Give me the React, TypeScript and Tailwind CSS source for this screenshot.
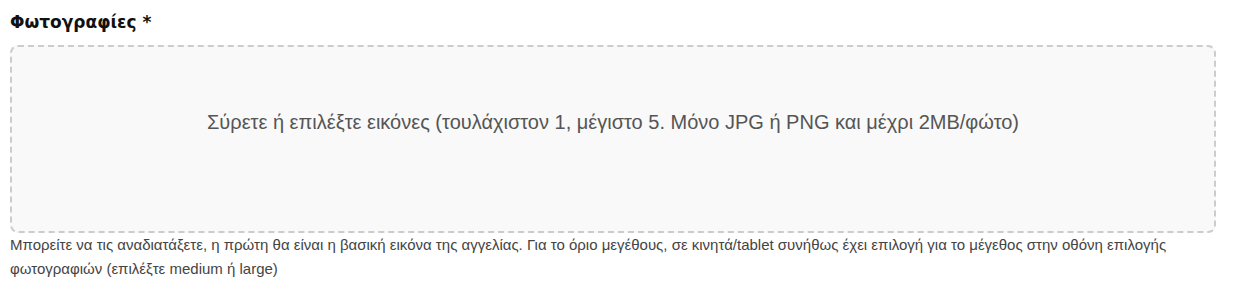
export default function App() {
  return (
    <div className="w-[1236px] h-[294px] bg-white pl-[10px] pr-[20px] pt-[10px]" style={{ fontFamily: '"Liberation Sans", Arial, sans-serif' }}>
      <div className="text-[17px] font-bold text-[#111] leading-[24px]" style={{ fontFamily: '"DejaVu Sans", Verdana, sans-serif' }}>
        Φωτογραφίες *
      </div>
      <div className="mt-[11px] h-[188px] rounded-[8px] border-2 border-dashed border-[#cccccc] bg-[#f9f9f9] flex items-start justify-center pt-[61px]">
        <span className="text-[20px] leading-[28px] text-[#555555]">
          Σύρετε ή επιλέξτε εικόνες (τουλάχιστον 1, μέγιστο 5. Μόνο JPG ή PNG και μέχρι 2MB/φώτο)
        </span>
      </div>
      <p className="mt-0 text-[15px] leading-[24px] text-[#444444]">
        Μπορείτε να τις αναδιατάξετε, η πρώτη θα είναι η βασική εικόνα της αγγελίας. Για το όριο μεγέθους, σε κινητά/tablet συνήθως έχει επιλογή για το μέγεθος στην οθόνη επιλογής φωτογραφιών (επιλέξτε medium ή large)
      </p>
    </div>
  );
}
